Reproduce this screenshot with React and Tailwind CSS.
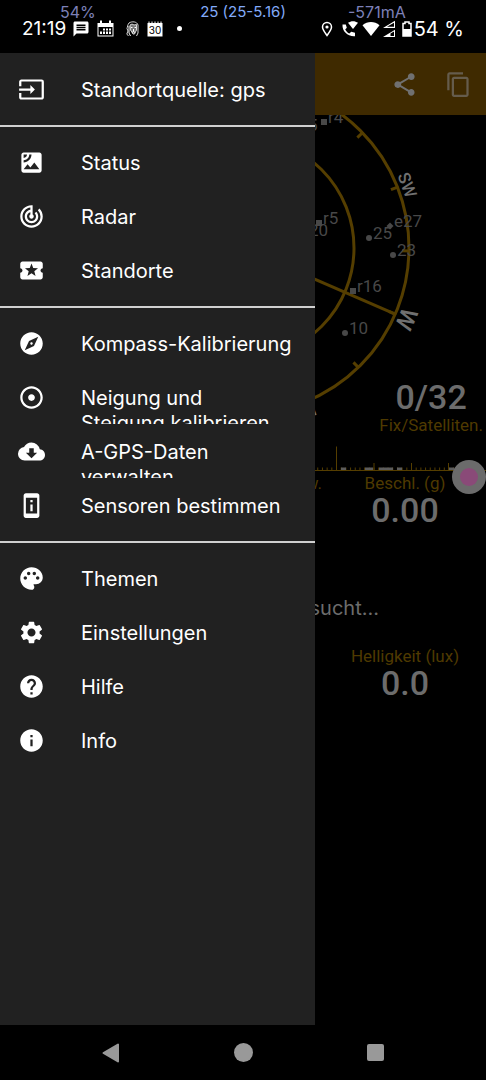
import { useState } from 'react';
import {
    MdInput, MdSatellite, MdTrackChanges, MdLocalPlay, MdExplore, MdAdjust, MdCloudDownload,
    MdPermDeviceInformation, MdPalette, MdSettings, MdHelp, MdInfo, MdShare, MdContentCopy, MdMessage,
} from 'react-icons/md';

const menuGroups = [
    [{ label: "Standortquelle: gps", icon: MdInput }],
    [
        { label: "Status", icon: MdSatellite },
        { label: "Radar", icon: MdTrackChanges },
        { label: "Standorte", icon: MdLocalPlay },
    ],
    [
        { label: "Kompass-Kalibrierung", icon: MdExplore },
        { label: "Neigung und\nSteigung kalibrieren", icon: MdAdjust },
        { label: "A-GPS-Daten\nverwalten", icon: MdCloudDownload },
        { label: "Sensoren bestimmen", icon: MdPermDeviceInformation },
    ],
    [
        { label: "Themen", icon: MdPalette },
        { label: "Einstellungen", icon: MdSettings },
        { label: "Hilfe", icon: MdHelp },
        { label: "Info", icon: MdInfo },
    ],
];

const satellites = [
    { id: "5", x: 304, y: 130, shape: "dot" },
    { id: "r4", x: 324, y: 122, shape: "square" },
    { id: "r5", x: 319, y: 223, shape: "square" },
    { id: "20", x: 305, y: 235, shape: "dot" },
    { id: "e27", x: 390, y: 226, shape: "diamond" },
    { id: "25", x: 369, y: 238, shape: "dot" },
    { id: "23", x: 393, y: 255, shape: "dot" },
    { id: "r16", x: 353, y: 291, shape: "square" },
    { id: "10", x: 345, y: 333, shape: "dot" },
];

function StatusBar() {
    return (
        <header className="h-[53px] shrink-0 text-white">
            <div className="grid grid-cols-3 h-5 pt-1 text-[16px] leading-4 text-[#7d80b8]">
                <span className="pl-[60px]">54%</span>
                <span className="text-center text-[15px] text-[#82aaf8]">25 (25-5.16)</span>
                <span className="pl-6">-571mA</span>
            </div>
            <div className="flex items-center h-[17px] pl-[22px] pr-[22px] leading-4">
                <span className="text-[19px] w-[50px]">21:19</span>
                <MdMessage className="size-[18px]" />
                <CalendarIcon />
                <LionIcon />
                <DayIcon />
                <span className="ml-[14px] size-[5px] rounded-full bg-white" />
                <div className="flex items-center ml-auto">
                    <svg viewBox="0 0 12 16" className="w-3 h-4 mr-[9px]" fill="none" stroke="white" strokeWidth="1.5">
                        <path d="M6 14.500C3.500 11 1.500 8.500 1.500 6a4.500 4.500 0 0 1 9 0C10.500 8.500 8.500 11 6 14.500Z" />
                        <circle cx="6" cy="6" r="1.600" fill="white" stroke="none" />
                    </svg>
                    <svg viewBox="0 0 16 16" className="size-4 mr-1" fill="white">
                        <path d="M0.500 3.500H3.800L4.800 6.800L3.200 8.500C4.200 10.400 5.800 11.800 7.400 12.600L9.200 10.800L13 11.800V15.200C6 15.800 0 10.500 0.500 3.500Z" />
                        <path d="M6 1.800C9 -0.400 13 -0.400 16 1.800L11 8Z" />
                    </svg>
                    <svg viewBox="0 0 18 16" className="w-[18px] h-4 mr-0.5" fill="white">
                        <path d="M0.500 4.200C5.500 0 12.500 0 17.500 4.200L9 15Z" />
                    </svg>
                    <svg viewBox="0 0 14 18" className="w-[14px] h-[18px] mr-1.5" fill="white">
                        <path d="M1 8L13 0.800V8Z M5 6.800H12V2.800Z" fillRule="evenodd" />
                        <path d="M1 17L13 9.800V17Z M8.500 16H12V11.600L8.500 13.600Z" fillRule="evenodd" />
                    </svg>
                    <svg viewBox="0 0 10 16" className="w-[10px] h-4 mr-0.5">
                        <path d="M3 1H7V2.500H9V15H1V2.500H3Z" fill="none" stroke="white" strokeWidth="1.500" />
                        <path d="M1 8H9V15H1Z" fill="white" />
                    </svg>
                    <span className="text-[20px]">54 %</span>
                </div>
            </div>
        </header>
    );
}

function CalendarIcon() {
    return (
        <svg viewBox="0 0 17 17" className="size-[17px] ml-[7px]" fill="white">
            <path d="M0.500 3H16.500V16.500H0.500Z M1.500 7V15.500H15.500V7Z" fillRule="evenodd" />
            <path d="M3 0.500H5V5H3Z M12 0.500H14V5H12Z" />
            <path d="M6 8.500H8V10.500H6Z M9 8.500H11V10.500H9Z M12 8.500H14V10.500H12Z M3 11.500H5V14H3Z M6 11.500H8V14H6Z M9 11.500H11V14H9Z M12 11.500H14V14H12Z" />
        </svg>
    );
}

function LionIcon() {
    return (
        <svg viewBox="0 0 13 16" className="w-[13px] h-4 ml-3" fill="none" stroke="#d8d8d8" strokeWidth="1">
            <path d="M3 2C6 0 11 0.500 12 4V12L10.500 15M3 2C1.500 4 1.500 6 1 7.500L2 10L0.800 13L2.500 15" />
            <path d="M4 4L6 3L8 4L10.500 3.500V9L8.500 13H7L4.500 9Z" fill="#777" />
            <path d="M5 6.500H6.500M8.500 6.500H10M7.500 8V10.500M3 5V12L4.500 15M6 11.500L7.500 10.500L9 11.500" stroke="white" />
        </svg>
    );
}

function DayIcon() {
    return (
        <svg viewBox="0 0 16 16" className="size-4 ml-2" fill="white">
            <path d="M0.500 2H15.500V15.500H0.500Z" />
            <path d="M2 0.500V2.500M5 0.500V2.500M8 0.500V2.500M11 0.500V2.500M14 0.500V2.500" stroke="white" />
            <text x="8" y="13" textAnchor="middle" fontSize="10" fill="black">30</text>
        </svg>
    );
}

function Satellite({ id, x, y, shape }) {
    return (
        <g fill="#484848">
            {shape === "dot" && <circle cx={x} cy={y} r="3" />}
            {shape === "square" && <rect x={x - 3} y={y - 3} width="6" height="6" />}
            {shape === "diamond" && <path d={`M${x - 3.5} ${y}l3.500 -3.500l3.500 3.500l-3.500 3.500Z`} />}
            <text x={x + 4} y={y + 1} fontSize="17">{id}</text>
        </g>
    );
}

function SkyPlot() {
    const ticks = Array.from({ length: 16 }, (_, i) => 23.5 + i * 22.5);

    return (
        <svg viewBox="0 115 486 331" className="block mx-auto w-[486px] h-[331px] font-[Roboto,sans-serif]">
            <g fill="none" stroke="#553e00" strokeWidth="3">
                <circle cx="243" cy="248" r="166" />
                <circle cx="243" cy="248" r="111" />
                <circle cx="243" cy="248" r="55" />
                {[23.5, 113.5].map((a) => (
                    <path key={a} d="M77 248H409" transform={`rotate(${a} 243 248)`} />
                ))}
                {ticks.map((a) => (
                    <path key={a} d="M402 248H410" transform={`rotate(${a} 243 248)`} />
                ))}
            </g>
            {satellites.map((s) => <Satellite key={s.id} {...s} />)}
            <g fill="#707070" fontWeight="500" textAnchor="middle">
                <text transform="rotate(-21 243 248) translate(413 248) rotate(90)" fontSize="17">SW</text>
                <text transform="rotate(23.500 243 248) translate(413 248) rotate(90)" fontSize="24">W</text>
                <text transform="rotate(68.500 243 248) translate(413 253) rotate(90)" fontSize="17">NW</text>
            </g>
        </svg>
    );
}

function CompassScale() {
    const minor = Array.from({ length: 103 }, (_, i) => 3.6875 + i * 4.6875);

    return (
        <svg viewBox="0 446 486 27" className="block mx-auto w-[486px] h-[27px]">
            <g stroke="#553e00">
                <path d="M0 470.500H486M336.500 446.500V470" />
                {minor.map((x) => <path key={x} d={`M${x} 467.500V470`} />)}
                <path d="M374 463V470M411.500 463V470M448.500 463V470" />
            </g>
            <path
                d="M341 467.500H346V470H341Z M365 467.500H373V470H365Z M379 467.500H393V470H379Z M397 467.500H402V470H397Z M449 467.500H454V470H449Z"
                fill="#5c5c5c"
            />
        </svg>
    );
}

function Reading({ label, value }) {
    return (
        <div className="col-start-3 text-center font-[Roboto,sans-serif]">
            <div className="text-[17px] leading-5 text-[#4f3a00]">{label}</div>
            <div className="text-[34px] leading-[34px] font-medium text-[#6c6c6c]">{value}</div>
        </div>
    );
}

function AppScreen() {
    return (
        <div>
            <div className="flex items-center justify-end gap-[27px] h-[62px] px-[14px] bg-[#3f2a00]">
                <button type="button" aria-label="Teilen" className="text-[#707070]"><MdShare className="size-[27px]" /></button>
                <button type="button" aria-label="Kopieren" className="text-[#655c4c]"><MdContentCopy className="size-[27px]" /></button>
            </div>
            <section className="relative overflow-hidden">
                <SkyPlot />
                <div className="absolute right-0 bottom-[11px] pr-[3px] text-center font-[Roboto,sans-serif]">
                    <div className="text-[34px] leading-9 font-medium text-[#6c6c6c]">0/32</div>
                    <div className="text-[17px] leading-5 text-[#4f3a00]">Fix/Satelliten.</div>
                </div>
            </section>
            <section className="relative">
                <CompassScale />
                <span className="absolute right-0 top-[14px] flex items-center justify-center size-[34px] rounded-full bg-[#6b6b6b]">
                    <span className="size-[18px] rounded-full bg-[#8a4a78]" />
                </span>
            </section>
            <section className="grid grid-cols-3">
                <div className="col-start-2 pr-0.5 text-right text-[17px] leading-5 text-[#4f3a00] font-[Roboto,sans-serif]">Geschw.</div>
                <Reading label="Beschl. (g)" value="0.00" />
            </section>
            <p className="mt-[67px] pr-[107px] text-right text-[20px] leading-7 text-[#6c6c6c]">Standort wird gesucht...</p>
            <section className="grid grid-cols-3 mt-6">
                <Reading label="Helligkeit (lux)" value="0.0" />
            </section>
        </div>
    );
}

function Drawer({ selected, onSelect }) {
    return (
        <nav className="absolute inset-y-0 left-0 w-[315px] pt-[9px] bg-[#212121] text-white">
            {menuGroups.map((group, i) => (
                <div key={i}>
                    {i > 0 && <hr className="mt-[9px] mb-2 h-0.5 border-0 bg-[#d0d0d0]" />}
                    <ul>
                        {group.map(({ label, icon: Icon }) => (
                            <li key={label}>
                                <button
                                    type="button"
                                    aria-current={selected === label}
                                    onClick={() => onSelect(label)}
                                    className="flex items-start w-full h-[54px] pl-[18px] pr-2 overflow-hidden text-left"
                                >
                                    <Icon className="size-[27px] mt-[14px] shrink-0" />
                                    <span className="ml-9 pt-4 text-[20px] leading-[25px] whitespace-pre-line">{label}</span>
                                </button>
                            </li>
                        ))}
                    </ul>
                </div>
            ))}
        </nav>
    );
}

function NavBar() {
    return (
        <footer className="grid grid-cols-3 h-[55px] shrink-0 px-[45px] bg-black">
            <button type="button" aria-label="Zurück" className="flex items-center justify-center">
                <svg viewBox="0 0 20 20" className="size-5" fill="#999" stroke="#999" strokeWidth="2" strokeLinejoin="round">
                    <path d="M2.500 10L17 1.500V18.500Z" />
                </svg>
            </button>
            <button type="button" aria-label="Startseite" className="flex items-center justify-center">
                <span className="size-[19px] rounded-full bg-[#999]" />
            </button>
            <button type="button" aria-label="Übersicht" className="flex items-center justify-center">
                <span className="size-[17px] rounded-xs bg-[#999]" />
            </button>
        </footer>
    );
}

function App() {
    const [selected, setSelected] = useState("Status");

    return (
        <div className="flex flex-col min-h-screen bg-black font-[Inter,sans-serif]">
            <StatusBar />
            <main className="relative flex-1 overflow-hidden">
                <AppScreen />
                <Drawer selected={selected} onSelect={setSelected} />
            </main>
            <NavBar />
        </div>
    );
}

export default App;
